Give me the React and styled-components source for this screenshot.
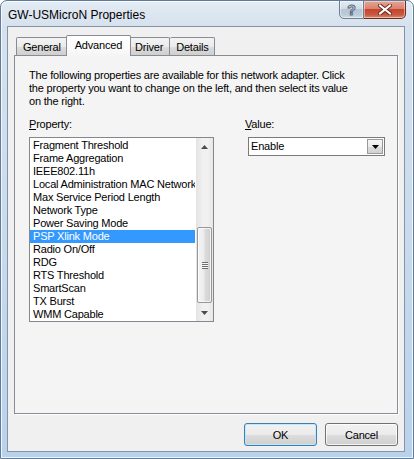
import React from 'react';
import styled, { createGlobalStyle } from 'styled-components';

const GlobalStyle = createGlobalStyle`
  html, body {
    margin: 0;
    padding: 0;
    background: #ffffff;
  }
  * {
    box-sizing: border-box;
  }
`;

const properties = [
  'Fragment Threshold',
  'Frame Aggregation',
  'IEEE802.11h',
  'Local Administration MAC Network',
  'Max Service Period Length',
  'Network Type',
  'Power Saving Mode',
  'PSP Xlink Mode',
  'Radio On/Off',
  'RDG',
  'RTS Threshold',
  'SmartScan',
  'TX Burst',
  'WMM Capable'
];

const tabs = ['General', 'Advanced', 'Driver', 'Details'];

// Outer Aero window frame
const Window = styled.div`
  width: 414px;
  height: 459px;
  display: flex;
  flex-direction: column;
  border: 1px solid #5f7c9b;
  border-radius: 7px 7px 0 0;
  background: linear-gradient(to bottom, #e3ebf3 0px, #d6e2ee 24px, #c6d9ec 60%, #b9d2eb 100%);
  box-shadow: inset 0 0 0 1px rgba(255, 255, 255, 0.75);
  font-family: 'Liberation Sans', Arial, sans-serif;
  font-size: 11px;
  letter-spacing: -0.2px;
  color: #000;
  overflow: hidden;
`;

const TitleBar = styled.div`
  height: 25px;
  display: flex;
  align-items: flex-start;
  justify-content: space-between;
  padding-left: 7px;
  padding-right: 7px;
`;

const Title = styled.span`
  font-size: 12px;
  letter-spacing: 0;
  line-height: 14px;
  padding-top: 7px;
  color: #000;
`;

const CaptionButtons = styled.div`
  display: flex;
  margin-top: -1px;
`;

const CaptionButton = styled.div`
  height: 19px;
  width: ${p => (p.close ? '42px' : '25px')};
  display: flex;
  align-items: center;
  justify-content: center;
  border: 1px solid ${p => (p.close ? '#6e2a23' : '#6d7f92')};
  border-left-width: ${p => (p.close ? '0' : '1px')};
  border-radius: ${p => (p.close ? '0 0 5px 0' : '0 0 0 5px')};
  background: ${p =>
    p.close
      ? 'linear-gradient(to bottom, #e8a493 0%, #d8826f 45%, #c4462f 50%, #c9583f 80%, #dd8a6b 100%)'
      : 'linear-gradient(to bottom, #e4ecf3 0%, #cfdbe6 45%, #b4c5d5 50%, #bccbd9 80%, #d0dde8 100%)'};
  box-shadow: inset 0 0 0 1px rgba(255, 255, 255, 0.45);
`;

const HelpGlyph = styled.span`
  font-family: 'Liberation Sans', Arial, sans-serif;
  font-weight: bold;
  font-size: 14px;
  letter-spacing: 0;
  color: #f4f7fa;
  -webkit-text-stroke: 1px #56687b;
  line-height: 14px;
`;

const Client = styled.div`
  flex: 1;
  margin: 0 8px 6px 6px;
  border: 1px solid #8494a6;
  background: #f0f0f0;
  display: flex;
  flex-direction: column;
  padding: 10px 6px 5px 6px;
`;

const TabStrip = styled.div`
  display: flex;
  align-items: flex-end;
  height: 20px;
  margin-top: -2px;
  padding-left: 2px;
  position: relative;
  z-index: 1;
`;

const Tab = styled.div`
  height: ${p => (p.active ? '21px' : '18px')};
  margin: ${p => (p.active ? '0 -2px -1px -2px' : '0')};
  padding: ${p => (p.active ? '0 8px' : '0 6px')};
  display: flex;
  align-items: center;
  border: 1px solid #898c95;
  border-bottom: none;
  border-left-width: ${p => (p.first || p.active ? '1px' : '0')};
  border-radius: 2px 2px 0 0;
  background: ${p =>
    p.active
      ? 'linear-gradient(to bottom, #ffffff 0%, #fbfbfb 60%, #f4f4f4 100%)'
      : 'linear-gradient(to bottom, #f3f3f3 0%, #ebebeb 50%, #dddddd 51%, #cfcfcf 100%)'};
  position: relative;
  z-index: ${p => (p.active ? 2 : 1)};
  padding-bottom: ${p => (p.active ? '3px' : '0')};
`;

const Panel = styled.div`
  flex: 1;
  border: 1px solid #898c95;
  background: #f4f4f4;
  box-shadow: 1px 1px 0 #ffffff;
  padding: 13px 13px 0 14px;
  display: flex;
  flex-direction: column;
`;

const Description = styled.p`
  margin: 0;
  line-height: 13px;
`;

const Fields = styled.div`
  display: grid;
  grid-template-columns: 185px 1fr;
  column-gap: 31px;
  margin-top: 10px;
`;

const Field = styled.div`
  display: flex;
  flex-direction: column;
`;

const Label = styled.label`
  line-height: 13px;
  height: 13px;
  margin-bottom: 6px;
`;

const ListBox = styled.div`
  height: 185px;
  border: 1px solid #828790;
  background: #ffffff;
  display: flex;
`;

const Items = styled.div`
  flex: 1;
  min-width: 0;
  padding-top: 1px;
`;

const Item = styled.div`
  height: 13px;
  line-height: 13px;
  padding-left: 3px;
  margin-right: 1px;
  white-space: nowrap;
  overflow: hidden;
  background: ${p => (p.selected ? '#3399ff' : 'transparent')};
  color: ${p => (p.selected ? '#ffffff' : '#000000')};
`;

const ScrollBar = styled.div`
  width: 17px;
  display: flex;
  flex-direction: column;
  background: linear-gradient(to right, #e3e3e3 0%, #f1f1f1 40%, #f1f1f1 70%, #e6e6e6 100%);
`;

const ArrowButton = styled.div`
  height: 17px;
  display: flex;
  align-items: center;
  justify-content: center;
`;

const Track = styled.div`
  flex: 1;
  display: flex;
  flex-direction: column;
  padding: 0 1px;
`;

const Thumb = styled.div`
  height: 76px;
  border: 1px solid #979797;
  border-radius: 2px;
  background: linear-gradient(to right, #f4f4f4 0%, #ececec 45%, #dbdbdb 55%, #cfcfcf 100%);
  box-shadow: inset 0 0 0 1px rgba(255, 255, 255, 0.7);
  display: flex;
  align-items: center;
  justify-content: center;
`;

const Grip = styled.span`
  width: 6px;
  height: 7px;
  background: repeating-linear-gradient(to bottom, #6e6e6e 0px, #6e6e6e 1px, #f7f7f7 1px, #f7f7f7 2px);
`;

const ComboBox = styled.div`
  margin-left: 3px;
  width: 137px;
  height: 19px;
  border: 1px solid #7a7a7a;
  background: #ffffff;
  display: flex;
  align-items: center;
  padding: 1px 1px 1px 2px;
`;

const ComboText = styled.span`
  flex: 1;
  line-height: 13px;
`;

const DropButton = styled.div`
  width: 16px;
  height: 15px;
  border: 1px solid #9a9a9a;
  background: linear-gradient(to bottom, #f6f6f6 0%, #ebebeb 50%, #dcdcdc 51%, #d2d2d2 100%);
  display: flex;
  align-items: center;
  justify-content: center;
`;

const ButtonRow = styled.div`
  display: flex;
  justify-content: flex-end;
  gap: 8px;
  padding-top: 9px;
`;

const Button = styled.button`
  width: 73px;
  height: 23px;
  padding: 0;
  font-family: 'Liberation Sans', Arial, sans-serif;
  font-size: 11px;
  letter-spacing: -0.2px;
  color: #000;
  border: 1px solid ${p => (p.primary ? '#3c7fb1' : '#707070')};
  border-radius: 3px;
  background: linear-gradient(to bottom, #f2f2f2 0%, #ebebeb 50%, #dddddd 51%, #cfcfcf 100%);
  box-shadow: inset 0 0 0 1px ${p => (p.primary ? 'rgba(190, 230, 253, 0.9)' : 'rgba(255, 255, 255, 0.8)')};
`;

const Triangle = ({ up, color = '#4d4d4d' }) => (
  <svg width="7" height="4" viewBox="0 0 7 4">
    <path d={up ? 'M0 4 L3.5 0 L7 4 Z' : 'M0 0 L7 0 L3.5 4 Z'} fill={color} />
  </svg>
);

const CloseGlyph = () => (
  <svg width="14" height="11" viewBox="0 0 14 11">
    <path
      d="M2 1.5 L12 9.5 M12 1.5 L2 9.5"
      stroke="#6a2a22"
      strokeWidth="4"
      strokeLinecap="square"
    />
    <path
      d="M2 1.5 L12 9.5 M12 1.5 L2 9.5"
      stroke="#ffffff"
      strokeWidth="2"
      strokeLinecap="square"
    />
  </svg>
);

const App = () => {
  const selected = 'PSP Xlink Mode';
  const activeTab = 'Advanced';
  return (
    <>
      <GlobalStyle />
      <Window>
        <TitleBar>
          <Title>GW-USMicroN Properties</Title>
          <CaptionButtons>
            <CaptionButton>
              <HelpGlyph>?</HelpGlyph>
            </CaptionButton>
            <CaptionButton close>
              <CloseGlyph />
            </CaptionButton>
          </CaptionButtons>
        </TitleBar>
        <Client>
          <TabStrip>
            {tabs.map((t, i) => (
              <Tab key={t} first={i === 0} active={t === activeTab}>
                {t}
              </Tab>
            ))}
          </TabStrip>
          <Panel>
            <Description>
              The following properties are available for this network adapter. Click
              <br />
              the property you want to change on the left, and then select its value
              <br />
              on the right.
            </Description>
            <Fields>
              <Field>
                <Label>
                  <u>P</u>roperty:
                </Label>
                <ListBox>
                  <Items>
                    {properties.map(p => (
                      <Item key={p} selected={p === selected}>
                        {p}
                      </Item>
                    ))}
                  </Items>
                  <ScrollBar>
                    <ArrowButton>
                      <Triangle up />
                    </ArrowButton>
                    <Track>
                      <Thumb style={{ marginTop: 72 }}>
                        <Grip />
                      </Thumb>
                    </Track>
                    <ArrowButton>
                      <Triangle />
                    </ArrowButton>
                  </ScrollBar>
                </ListBox>
              </Field>
              <Field>
                <Label>
                  <u>V</u>alue:
                </Label>
                <ComboBox>
                  <ComboText>Enable</ComboText>
                  <DropButton>
                    <Triangle color="#000000" />
                  </DropButton>
                </ComboBox>
              </Field>
            </Fields>
          </Panel>
          <ButtonRow>
            <Button primary>OK</Button>
            <Button>Cancel</Button>
          </ButtonRow>
        </Client>
      </Window>
    </>
  );
};

export default App;
